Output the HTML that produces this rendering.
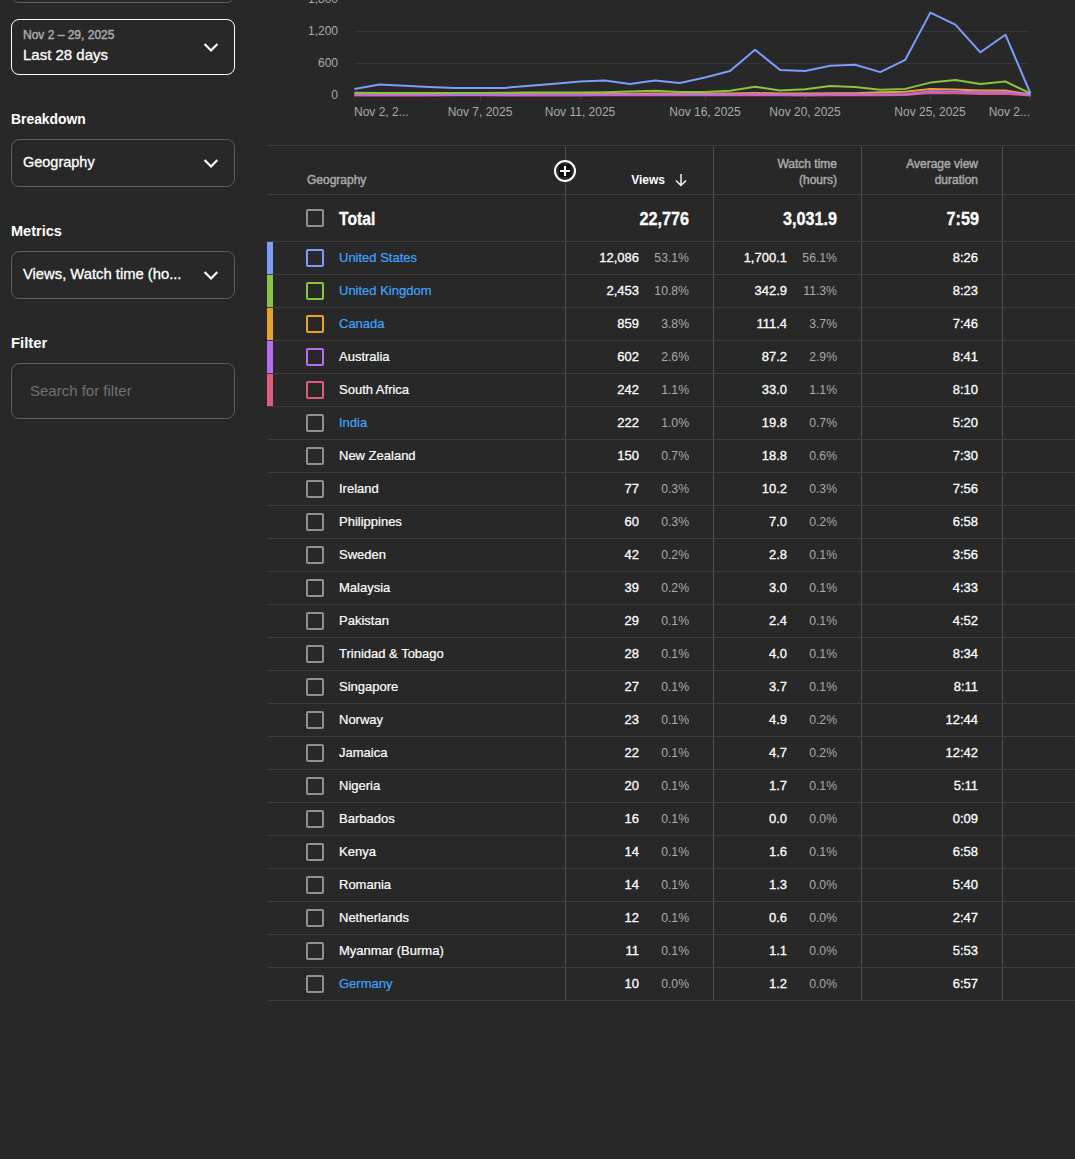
<!DOCTYPE html>
<html><head><meta charset="utf-8"><style>
html,body{margin:0;padding:0;background:#282828;width:1075px;height:1159px;overflow:hidden;}
body{position:relative;font-family:"Liberation Sans",sans-serif;color:#fff;}
.a{position:absolute;white-space:nowrap;}
.box{position:absolute;left:11px;width:222px;border:1px solid #5e5e5e;border-radius:8px;box-sizing:content-box;}
.lbl{position:absolute;left:11px;font-size:15px;font-weight:bold;line-height:18px;transform:scaleX(0.925);transform-origin:left;}
.md{-webkit-text-stroke-width:0.3px;}
.nm{-webkit-text-stroke-width:0.2px;}
.chev{position:absolute;}
.hl{position:absolute;left:267px;width:808px;height:1px;background:#3d3d3d;}
.vl{position:absolute;width:1px;background:#505050;}
.t{position:absolute;font-size:13px;line-height:16px;white-space:nowrap;}
.r{text-align:right;}
.w{color:#fff;}
.g{color:#aaaaaa;}
.lk{color:#3ea6ff;}
.cb{position:absolute;left:306px;width:14px;height:14px;border:2px solid #909090;border-radius:2px;}
.bar{position:absolute;left:267px;width:6px;}
.yl{position:absolute;font-size:12px;line-height:14px;color:#aaaaaa;text-align:right;width:60px;left:278px;}
.xl{position:absolute;font-size:12px;line-height:14px;color:#aaaaaa;white-space:nowrap;}
</style></head><body>

<div class="box" style="top:-54px;height:55px;"></div>
<div class="box" style="top:19px;height:54px;border-color:#ffffff;"></div>
<div class="a" style="left:23px;top:28px;font-size:12px;line-height:14px;color:#aaaaaa;-webkit-text-stroke-width:0.45px">Nov 2 – 29, 2025</div>
<div class="a md" style="left:23px;top:46px;font-size:15px;line-height:18px;color:#fff;">Last 28 days</div>
<svg class="chev" style="left:203px;top:42px" width="16" height="10" viewBox="0 0 16 10"><polyline points="1.6,1.9 8,8.4 14.4,1.9" fill="none" stroke="#fff" stroke-width="2.2"/></svg>
<div class="lbl" style="top:110px">Breakdown</div>
<div class="box" style="top:139px;height:46px;"></div>
<div class="a md" style="left:23px;top:153px;font-size:15px;line-height:18px;transform:scaleX(0.965);transform-origin:left">Geography</div>
<svg class="chev" style="left:203px;top:158px" width="16" height="10" viewBox="0 0 16 10"><polyline points="1.6,1.9 8,8.4 14.4,1.9" fill="none" stroke="#fff" stroke-width="2.2"/></svg>
<div class="lbl" style="top:222px;transform:scaleX(0.97)">Metrics</div>
<div class="box" style="top:251px;height:46px;"></div>
<div class="a md" style="left:23px;top:265px;font-size:15px;line-height:18px;transform:scaleX(0.985);transform-origin:left">Views, Watch time (ho...</div>
<svg class="chev" style="left:203px;top:270px" width="16" height="10" viewBox="0 0 16 10"><polyline points="1.6,1.9 8,8.4 14.4,1.9" fill="none" stroke="#fff" stroke-width="2.2"/></svg>
<div class="lbl" style="top:334px;transform:scaleX(0.99)">Filter</div>
<div class="box" style="top:363px;height:54px;"></div>
<div class="a" style="left:30px;top:382px;font-size:15px;line-height:18px;color:#717171;">Search for filter</div>
<svg class="a" style="left:0;top:0" width="1075" height="140" viewBox="0 0 1075 140">
<rect x="354" y="-1" width="676" height="1" fill="#363636"/>
<rect x="354" y="31" width="676" height="1" fill="#363636"/>
<rect x="354" y="63" width="676" height="1" fill="#363636"/>
<rect x="354" y="96" width="1" height="5" fill="#3a3a3a"/>
<rect x="480" y="96" width="1" height="5" fill="#3a3a3a"/>
<rect x="580" y="96" width="1" height="5" fill="#3a3a3a"/>
<rect x="705" y="96" width="1" height="5" fill="#3a3a3a"/>
<rect x="805" y="96" width="1" height="5" fill="#3a3a3a"/>
<rect x="930" y="96" width="1" height="5" fill="#3a3a3a"/>
<rect x="1030" y="96" width="1" height="5" fill="#3a3a3a"/>
<polyline points="354.40,95.4 379.44,95.4 404.48,95.4 429.52,95.4 454.56,95.3 479.60,95.3 504.64,95.4 529.68,95.4 554.72,95.4 579.76,95.4 604.80,95.3 629.84,95.3 654.88,95.3 679.92,95.3 704.96,95.3 730.00,95.3 755.04,95.2 780.08,95.3 805.12,95.4 830.16,95.3 855.20,95.3 880.24,95.2 905.28,95 930.32,93 955.36,93.2 980.40,94 1005.44,93.8 1030.48,95.5" fill="none" stroke="#e25b7d" stroke-width="2" stroke-linejoin="round"/>
<polyline points="354.40,94.2 379.44,94.2 404.48,94.2 429.52,94.2 454.56,94.2 479.60,94.2 504.64,94.2 529.68,94.0 554.72,93.9 579.76,93.8 604.80,93.8 629.84,93.7 654.88,93.6 679.92,93.6 704.96,93.5 730.00,93.5 755.04,93.0 780.08,93.4 805.12,93.6 830.16,93.2 855.20,93.2 880.24,92.3 905.28,91.8 930.32,88.9 955.36,89.5 980.40,90.5 1005.44,90.5 1030.48,94.5" fill="none" stroke="#eea222" stroke-width="2" stroke-linejoin="round"/>
<polyline points="354.40,94.6 379.44,94.6 404.48,94.3 429.52,94.6 454.56,94.8 479.60,94.8 504.64,94.8 529.68,94.6 554.72,94.5 579.76,94.5 604.80,94.5 629.84,94.5 654.88,94.4 679.92,94.4 704.96,94.4 730.00,94.4 755.04,94.1 780.08,94.4 805.12,94.5 830.16,94.3 855.20,94.3 880.24,94.3 905.28,94.2 930.32,91.3 955.36,91.5 980.40,92.3 1005.44,92 1030.48,95" fill="none" stroke="#b86cf2" stroke-width="2" stroke-linejoin="round"/>
<polyline points="354.40,92.7 379.44,93 404.48,93 429.52,93 454.56,93 479.60,93 504.64,92.8 529.68,92.6 554.72,92.5 579.76,92.4 604.80,92.2 629.84,91.5 654.88,90.8 679.92,92.1 704.96,92 730.00,90.8 755.04,86.7 780.08,90.4 805.12,89.2 830.16,86 855.20,87 880.24,89.8 905.28,88.9 930.32,82.6 955.36,80 980.40,84.1 1005.44,81.5 1030.48,93.5" fill="none" stroke="#89c440" stroke-width="2" stroke-linejoin="round"/>
<polyline points="354.40,89 379.44,84.6 404.48,85.7 429.52,86.9 454.56,87.9 479.60,87.9 504.64,87.9 529.68,85.8 554.72,83.7 579.76,81.6 604.80,80.6 629.84,84 654.88,80.6 679.92,83 704.96,77.5 730.00,71 755.04,49.7 780.08,70 805.12,71.1 830.16,65.8 855.20,64.8 880.24,72.1 905.28,59.8 930.32,12.6 955.36,24.6 980.40,52.3 1005.44,34.7 1030.48,93.5" fill="none" stroke="#7f9bfb" stroke-width="2" stroke-linejoin="round"/>
</svg>
<div class="yl" style="top:-8px">1,800</div>
<div class="yl" style="top:24px">1,200</div>
<div class="yl" style="top:56px">600</div>
<div class="yl" style="top:88px">0</div>
<div class="xl" style="left:354px;top:105px">Nov 2, 2...</div>
<div class="xl" style="left:420px;width:120px;text-align:center;top:105px">Nov 7, 2025</div>
<div class="xl" style="left:520px;width:120px;text-align:center;top:105px">Nov 11, 2025</div>
<div class="xl" style="left:645px;width:120px;text-align:center;top:105px">Nov 16, 2025</div>
<div class="xl" style="left:745px;width:120px;text-align:center;top:105px">Nov 20, 2025</div>
<div class="xl" style="left:870px;width:120px;text-align:center;top:105px">Nov 25, 2025</div>
<div class="xl" style="left:970px;width:60px;text-align:right;top:105px">Nov 2...</div>
<div class="vl" style="left:565px;top:146px;height:854px"></div>
<div class="vl" style="left:713px;top:146px;height:854px"></div>
<div class="vl" style="left:861px;top:146px;height:854px"></div>
<div class="vl" style="left:1002px;top:146px;height:854px"></div>
<div class="hl" style="top:145px"></div>
<div class="hl" style="top:194px"></div>
<div class="hl" style="top:241px"></div>
<div class="hl" style="top:274px"></div>
<div class="hl" style="top:307px"></div>
<div class="hl" style="top:340px"></div>
<div class="hl" style="top:373px"></div>
<div class="hl" style="top:406px"></div>
<div class="hl" style="top:439px"></div>
<div class="hl" style="top:472px"></div>
<div class="hl" style="top:505px"></div>
<div class="hl" style="top:538px"></div>
<div class="hl" style="top:571px"></div>
<div class="hl" style="top:604px"></div>
<div class="hl" style="top:637px"></div>
<div class="hl" style="top:670px"></div>
<div class="hl" style="top:703px"></div>
<div class="hl" style="top:736px"></div>
<div class="hl" style="top:769px"></div>
<div class="hl" style="top:802px"></div>
<div class="hl" style="top:835px"></div>
<div class="hl" style="top:868px"></div>
<div class="hl" style="top:901px"></div>
<div class="hl" style="top:934px"></div>
<div class="hl" style="top:967px"></div>
<div class="hl" style="top:1000px"></div>
<div class="t g" style="left:307px;top:173px;font-size:12px;line-height:14px;-webkit-text-stroke-width:0.45px">Geography</div>
<div class="t w r" style="left:589px;width:76px;top:173px;font-size:12px;line-height:14px;font-weight:bold">Views</div>
<svg class="a" style="left:674px;top:173px" width="14" height="14" viewBox="0 0 14 14"><path d="M7 1V12.5M2 7.5L7 12.5L12 7.5" fill="none" stroke="#fff" stroke-width="1.4"/></svg>
<div class="t g r" style="left:737px;width:100px;top:156px;font-size:12px;line-height:16px;-webkit-text-stroke-width:0.45px">Watch time<br>(hours)</div>
<div class="t g r" style="left:878px;width:100px;top:156px;font-size:12px;line-height:16px;-webkit-text-stroke-width:0.45px">Average view<br>duration</div>
<svg class="a" style="left:553px;top:159px" width="24" height="24" viewBox="0 0 24 24"><circle cx="12" cy="12" r="10" fill="#252525" fill-opacity="0.6" stroke="#fff" stroke-width="2"/><rect x="6" y="6" width="12" height="12" fill="#0d0d0d"/><path d="M12 7V17M7 12H17" stroke="#fff" stroke-width="2.1"/></svg>
<div class="cb" style="top:209px"></div>
<div class="t w" style="left:339px;top:209px;font-size:18px;line-height:20px;font-weight:bold;-webkit-text-stroke-width:0.3px;transform:scaleX(0.87);transform-origin:left">Total</div>
<div class="t w r" style="left:589px;width:100px;top:209px;font-size:18px;line-height:20px;font-weight:bold;-webkit-text-stroke-width:0.3px;transform:scaleX(0.9);transform-origin:right">22,776</div>
<div class="t w r" style="left:737px;width:100px;top:209px;font-size:18px;line-height:20px;font-weight:bold;-webkit-text-stroke-width:0.3px;transform:scaleX(0.9);transform-origin:right">3,031.9</div>
<div class="t w r" style="left:879px;width:100px;top:209px;font-size:18px;line-height:20px;font-weight:bold;-webkit-text-stroke-width:0.3px;transform:scaleX(0.9);transform-origin:right">7:59</div>
<div class="bar" style="top:242px;height:32px;background:#7f9bfb"></div>
<div class="cb" style="top:249px;border-color:#7f9bfb"></div>
<div class="t lk nm" style="left:339px;top:250px">United States</div>
<div class="t w r" style="left:539px;width:100px;top:250px;-webkit-text-stroke-width:0.3px">12,086</div>
<div class="t g r" style="left:619px;width:70px;top:250px;transform:scaleX(0.94);transform-origin:right">53.1%</div>
<div class="t w r" style="left:687px;width:100px;top:250px;-webkit-text-stroke-width:0.3px">1,700.1</div>
<div class="t g r" style="left:767px;width:70px;top:250px;transform:scaleX(0.94);transform-origin:right">56.1%</div>
<div class="t w r" style="left:878px;width:100px;top:250px;-webkit-text-stroke-width:0.3px">8:26</div>
<div class="bar" style="top:275px;height:32px;background:#89c440"></div>
<div class="cb" style="top:282px;border-color:#89c440"></div>
<div class="t lk nm" style="left:339px;top:283px">United Kingdom</div>
<div class="t w r" style="left:539px;width:100px;top:283px;-webkit-text-stroke-width:0.3px">2,453</div>
<div class="t g r" style="left:619px;width:70px;top:283px;transform:scaleX(0.94);transform-origin:right">10.8%</div>
<div class="t w r" style="left:687px;width:100px;top:283px;-webkit-text-stroke-width:0.3px">342.9</div>
<div class="t g r" style="left:767px;width:70px;top:283px;transform:scaleX(0.94);transform-origin:right">11.3%</div>
<div class="t w r" style="left:878px;width:100px;top:283px;-webkit-text-stroke-width:0.3px">8:23</div>
<div class="bar" style="top:308px;height:32px;background:#eea222"></div>
<div class="cb" style="top:315px;border-color:#eea222"></div>
<div class="t lk nm" style="left:339px;top:316px">Canada</div>
<div class="t w r" style="left:539px;width:100px;top:316px;-webkit-text-stroke-width:0.3px">859</div>
<div class="t g r" style="left:619px;width:70px;top:316px;transform:scaleX(0.94);transform-origin:right">3.8%</div>
<div class="t w r" style="left:687px;width:100px;top:316px;-webkit-text-stroke-width:0.3px">111.4</div>
<div class="t g r" style="left:767px;width:70px;top:316px;transform:scaleX(0.94);transform-origin:right">3.7%</div>
<div class="t w r" style="left:878px;width:100px;top:316px;-webkit-text-stroke-width:0.3px">7:46</div>
<div class="bar" style="top:341px;height:32px;background:#b86cf2"></div>
<div class="cb" style="top:348px;border-color:#b86cf2"></div>
<div class="t w nm" style="left:339px;top:349px">Australia</div>
<div class="t w r" style="left:539px;width:100px;top:349px;-webkit-text-stroke-width:0.3px">602</div>
<div class="t g r" style="left:619px;width:70px;top:349px;transform:scaleX(0.94);transform-origin:right">2.6%</div>
<div class="t w r" style="left:687px;width:100px;top:349px;-webkit-text-stroke-width:0.3px">87.2</div>
<div class="t g r" style="left:767px;width:70px;top:349px;transform:scaleX(0.94);transform-origin:right">2.9%</div>
<div class="t w r" style="left:878px;width:100px;top:349px;-webkit-text-stroke-width:0.3px">8:41</div>
<div class="bar" style="top:374px;height:32px;background:#e25b7d"></div>
<div class="cb" style="top:381px;border-color:#e25b7d"></div>
<div class="t w nm" style="left:339px;top:382px">South Africa</div>
<div class="t w r" style="left:539px;width:100px;top:382px;-webkit-text-stroke-width:0.3px">242</div>
<div class="t g r" style="left:619px;width:70px;top:382px;transform:scaleX(0.94);transform-origin:right">1.1%</div>
<div class="t w r" style="left:687px;width:100px;top:382px;-webkit-text-stroke-width:0.3px">33.0</div>
<div class="t g r" style="left:767px;width:70px;top:382px;transform:scaleX(0.94);transform-origin:right">1.1%</div>
<div class="t w r" style="left:878px;width:100px;top:382px;-webkit-text-stroke-width:0.3px">8:10</div>
<div class="cb" style="top:414px"></div>
<div class="t lk nm" style="left:339px;top:415px">India</div>
<div class="t w r" style="left:539px;width:100px;top:415px;-webkit-text-stroke-width:0.3px">222</div>
<div class="t g r" style="left:619px;width:70px;top:415px;transform:scaleX(0.94);transform-origin:right">1.0%</div>
<div class="t w r" style="left:687px;width:100px;top:415px;-webkit-text-stroke-width:0.3px">19.8</div>
<div class="t g r" style="left:767px;width:70px;top:415px;transform:scaleX(0.94);transform-origin:right">0.7%</div>
<div class="t w r" style="left:878px;width:100px;top:415px;-webkit-text-stroke-width:0.3px">5:20</div>
<div class="cb" style="top:447px"></div>
<div class="t w nm" style="left:339px;top:448px">New Zealand</div>
<div class="t w r" style="left:539px;width:100px;top:448px;-webkit-text-stroke-width:0.3px">150</div>
<div class="t g r" style="left:619px;width:70px;top:448px;transform:scaleX(0.94);transform-origin:right">0.7%</div>
<div class="t w r" style="left:687px;width:100px;top:448px;-webkit-text-stroke-width:0.3px">18.8</div>
<div class="t g r" style="left:767px;width:70px;top:448px;transform:scaleX(0.94);transform-origin:right">0.6%</div>
<div class="t w r" style="left:878px;width:100px;top:448px;-webkit-text-stroke-width:0.3px">7:30</div>
<div class="cb" style="top:480px"></div>
<div class="t w nm" style="left:339px;top:481px">Ireland</div>
<div class="t w r" style="left:539px;width:100px;top:481px;-webkit-text-stroke-width:0.3px">77</div>
<div class="t g r" style="left:619px;width:70px;top:481px;transform:scaleX(0.94);transform-origin:right">0.3%</div>
<div class="t w r" style="left:687px;width:100px;top:481px;-webkit-text-stroke-width:0.3px">10.2</div>
<div class="t g r" style="left:767px;width:70px;top:481px;transform:scaleX(0.94);transform-origin:right">0.3%</div>
<div class="t w r" style="left:878px;width:100px;top:481px;-webkit-text-stroke-width:0.3px">7:56</div>
<div class="cb" style="top:513px"></div>
<div class="t w nm" style="left:339px;top:514px">Philippines</div>
<div class="t w r" style="left:539px;width:100px;top:514px;-webkit-text-stroke-width:0.3px">60</div>
<div class="t g r" style="left:619px;width:70px;top:514px;transform:scaleX(0.94);transform-origin:right">0.3%</div>
<div class="t w r" style="left:687px;width:100px;top:514px;-webkit-text-stroke-width:0.3px">7.0</div>
<div class="t g r" style="left:767px;width:70px;top:514px;transform:scaleX(0.94);transform-origin:right">0.2%</div>
<div class="t w r" style="left:878px;width:100px;top:514px;-webkit-text-stroke-width:0.3px">6:58</div>
<div class="cb" style="top:546px"></div>
<div class="t w nm" style="left:339px;top:547px">Sweden</div>
<div class="t w r" style="left:539px;width:100px;top:547px;-webkit-text-stroke-width:0.3px">42</div>
<div class="t g r" style="left:619px;width:70px;top:547px;transform:scaleX(0.94);transform-origin:right">0.2%</div>
<div class="t w r" style="left:687px;width:100px;top:547px;-webkit-text-stroke-width:0.3px">2.8</div>
<div class="t g r" style="left:767px;width:70px;top:547px;transform:scaleX(0.94);transform-origin:right">0.1%</div>
<div class="t w r" style="left:878px;width:100px;top:547px;-webkit-text-stroke-width:0.3px">3:56</div>
<div class="cb" style="top:579px"></div>
<div class="t w nm" style="left:339px;top:580px">Malaysia</div>
<div class="t w r" style="left:539px;width:100px;top:580px;-webkit-text-stroke-width:0.3px">39</div>
<div class="t g r" style="left:619px;width:70px;top:580px;transform:scaleX(0.94);transform-origin:right">0.2%</div>
<div class="t w r" style="left:687px;width:100px;top:580px;-webkit-text-stroke-width:0.3px">3.0</div>
<div class="t g r" style="left:767px;width:70px;top:580px;transform:scaleX(0.94);transform-origin:right">0.1%</div>
<div class="t w r" style="left:878px;width:100px;top:580px;-webkit-text-stroke-width:0.3px">4:33</div>
<div class="cb" style="top:612px"></div>
<div class="t w nm" style="left:339px;top:613px">Pakistan</div>
<div class="t w r" style="left:539px;width:100px;top:613px;-webkit-text-stroke-width:0.3px">29</div>
<div class="t g r" style="left:619px;width:70px;top:613px;transform:scaleX(0.94);transform-origin:right">0.1%</div>
<div class="t w r" style="left:687px;width:100px;top:613px;-webkit-text-stroke-width:0.3px">2.4</div>
<div class="t g r" style="left:767px;width:70px;top:613px;transform:scaleX(0.94);transform-origin:right">0.1%</div>
<div class="t w r" style="left:878px;width:100px;top:613px;-webkit-text-stroke-width:0.3px">4:52</div>
<div class="cb" style="top:645px"></div>
<div class="t w nm" style="left:339px;top:646px">Trinidad &amp; Tobago</div>
<div class="t w r" style="left:539px;width:100px;top:646px;-webkit-text-stroke-width:0.3px">28</div>
<div class="t g r" style="left:619px;width:70px;top:646px;transform:scaleX(0.94);transform-origin:right">0.1%</div>
<div class="t w r" style="left:687px;width:100px;top:646px;-webkit-text-stroke-width:0.3px">4.0</div>
<div class="t g r" style="left:767px;width:70px;top:646px;transform:scaleX(0.94);transform-origin:right">0.1%</div>
<div class="t w r" style="left:878px;width:100px;top:646px;-webkit-text-stroke-width:0.3px">8:34</div>
<div class="cb" style="top:678px"></div>
<div class="t w nm" style="left:339px;top:679px">Singapore</div>
<div class="t w r" style="left:539px;width:100px;top:679px;-webkit-text-stroke-width:0.3px">27</div>
<div class="t g r" style="left:619px;width:70px;top:679px;transform:scaleX(0.94);transform-origin:right">0.1%</div>
<div class="t w r" style="left:687px;width:100px;top:679px;-webkit-text-stroke-width:0.3px">3.7</div>
<div class="t g r" style="left:767px;width:70px;top:679px;transform:scaleX(0.94);transform-origin:right">0.1%</div>
<div class="t w r" style="left:878px;width:100px;top:679px;-webkit-text-stroke-width:0.3px">8:11</div>
<div class="cb" style="top:711px"></div>
<div class="t w nm" style="left:339px;top:712px">Norway</div>
<div class="t w r" style="left:539px;width:100px;top:712px;-webkit-text-stroke-width:0.3px">23</div>
<div class="t g r" style="left:619px;width:70px;top:712px;transform:scaleX(0.94);transform-origin:right">0.1%</div>
<div class="t w r" style="left:687px;width:100px;top:712px;-webkit-text-stroke-width:0.3px">4.9</div>
<div class="t g r" style="left:767px;width:70px;top:712px;transform:scaleX(0.94);transform-origin:right">0.2%</div>
<div class="t w r" style="left:878px;width:100px;top:712px;-webkit-text-stroke-width:0.3px">12:44</div>
<div class="cb" style="top:744px"></div>
<div class="t w nm" style="left:339px;top:745px">Jamaica</div>
<div class="t w r" style="left:539px;width:100px;top:745px;-webkit-text-stroke-width:0.3px">22</div>
<div class="t g r" style="left:619px;width:70px;top:745px;transform:scaleX(0.94);transform-origin:right">0.1%</div>
<div class="t w r" style="left:687px;width:100px;top:745px;-webkit-text-stroke-width:0.3px">4.7</div>
<div class="t g r" style="left:767px;width:70px;top:745px;transform:scaleX(0.94);transform-origin:right">0.2%</div>
<div class="t w r" style="left:878px;width:100px;top:745px;-webkit-text-stroke-width:0.3px">12:42</div>
<div class="cb" style="top:777px"></div>
<div class="t w nm" style="left:339px;top:778px">Nigeria</div>
<div class="t w r" style="left:539px;width:100px;top:778px;-webkit-text-stroke-width:0.3px">20</div>
<div class="t g r" style="left:619px;width:70px;top:778px;transform:scaleX(0.94);transform-origin:right">0.1%</div>
<div class="t w r" style="left:687px;width:100px;top:778px;-webkit-text-stroke-width:0.3px">1.7</div>
<div class="t g r" style="left:767px;width:70px;top:778px;transform:scaleX(0.94);transform-origin:right">0.1%</div>
<div class="t w r" style="left:878px;width:100px;top:778px;-webkit-text-stroke-width:0.3px">5:11</div>
<div class="cb" style="top:810px"></div>
<div class="t w nm" style="left:339px;top:811px">Barbados</div>
<div class="t w r" style="left:539px;width:100px;top:811px;-webkit-text-stroke-width:0.3px">16</div>
<div class="t g r" style="left:619px;width:70px;top:811px;transform:scaleX(0.94);transform-origin:right">0.1%</div>
<div class="t w r" style="left:687px;width:100px;top:811px;-webkit-text-stroke-width:0.3px">0.0</div>
<div class="t g r" style="left:767px;width:70px;top:811px;transform:scaleX(0.94);transform-origin:right">0.0%</div>
<div class="t w r" style="left:878px;width:100px;top:811px;-webkit-text-stroke-width:0.3px">0:09</div>
<div class="cb" style="top:843px"></div>
<div class="t w nm" style="left:339px;top:844px">Kenya</div>
<div class="t w r" style="left:539px;width:100px;top:844px;-webkit-text-stroke-width:0.3px">14</div>
<div class="t g r" style="left:619px;width:70px;top:844px;transform:scaleX(0.94);transform-origin:right">0.1%</div>
<div class="t w r" style="left:687px;width:100px;top:844px;-webkit-text-stroke-width:0.3px">1.6</div>
<div class="t g r" style="left:767px;width:70px;top:844px;transform:scaleX(0.94);transform-origin:right">0.1%</div>
<div class="t w r" style="left:878px;width:100px;top:844px;-webkit-text-stroke-width:0.3px">6:58</div>
<div class="cb" style="top:876px"></div>
<div class="t w nm" style="left:339px;top:877px">Romania</div>
<div class="t w r" style="left:539px;width:100px;top:877px;-webkit-text-stroke-width:0.3px">14</div>
<div class="t g r" style="left:619px;width:70px;top:877px;transform:scaleX(0.94);transform-origin:right">0.1%</div>
<div class="t w r" style="left:687px;width:100px;top:877px;-webkit-text-stroke-width:0.3px">1.3</div>
<div class="t g r" style="left:767px;width:70px;top:877px;transform:scaleX(0.94);transform-origin:right">0.0%</div>
<div class="t w r" style="left:878px;width:100px;top:877px;-webkit-text-stroke-width:0.3px">5:40</div>
<div class="cb" style="top:909px"></div>
<div class="t w nm" style="left:339px;top:910px">Netherlands</div>
<div class="t w r" style="left:539px;width:100px;top:910px;-webkit-text-stroke-width:0.3px">12</div>
<div class="t g r" style="left:619px;width:70px;top:910px;transform:scaleX(0.94);transform-origin:right">0.1%</div>
<div class="t w r" style="left:687px;width:100px;top:910px;-webkit-text-stroke-width:0.3px">0.6</div>
<div class="t g r" style="left:767px;width:70px;top:910px;transform:scaleX(0.94);transform-origin:right">0.0%</div>
<div class="t w r" style="left:878px;width:100px;top:910px;-webkit-text-stroke-width:0.3px">2:47</div>
<div class="cb" style="top:942px"></div>
<div class="t w nm" style="left:339px;top:943px">Myanmar (Burma)</div>
<div class="t w r" style="left:539px;width:100px;top:943px;-webkit-text-stroke-width:0.3px">11</div>
<div class="t g r" style="left:619px;width:70px;top:943px;transform:scaleX(0.94);transform-origin:right">0.1%</div>
<div class="t w r" style="left:687px;width:100px;top:943px;-webkit-text-stroke-width:0.3px">1.1</div>
<div class="t g r" style="left:767px;width:70px;top:943px;transform:scaleX(0.94);transform-origin:right">0.0%</div>
<div class="t w r" style="left:878px;width:100px;top:943px;-webkit-text-stroke-width:0.3px">5:53</div>
<div class="cb" style="top:975px"></div>
<div class="t lk nm" style="left:339px;top:976px">Germany</div>
<div class="t w r" style="left:539px;width:100px;top:976px;-webkit-text-stroke-width:0.3px">10</div>
<div class="t g r" style="left:619px;width:70px;top:976px;transform:scaleX(0.94);transform-origin:right">0.0%</div>
<div class="t w r" style="left:687px;width:100px;top:976px;-webkit-text-stroke-width:0.3px">1.2</div>
<div class="t g r" style="left:767px;width:70px;top:976px;transform:scaleX(0.94);transform-origin:right">0.0%</div>
<div class="t w r" style="left:878px;width:100px;top:976px;-webkit-text-stroke-width:0.3px">6:57</div>
</body></html>
